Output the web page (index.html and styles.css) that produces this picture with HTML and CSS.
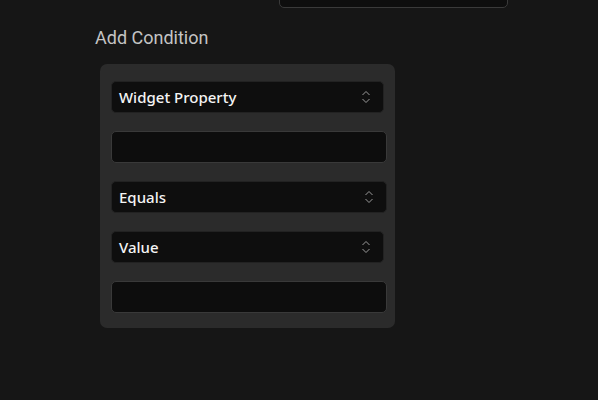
FILE: index.html
```html
<!DOCTYPE html>
<html lang="en">
<head>
<meta charset="utf-8">
<title>Add Condition</title>
<link rel="stylesheet" href="styles.css">
</head>
<body>
<div class="page">
  <div class="top-row">
    <span class="top-label">Widget Type</span>
    <div class="top-input"></div>
  </div>
  <h2 class="heading">Add Condition</h2>
  <div class="card">
    <div class="select narrow">
      <span>Widget Property</span>
      <svg class="chev" width="10" height="16" viewBox="0 0 10 16"><path d="M1.5 6 L5 2.5 L8.5 6 M1.5 10 L5 13.5 L8.5 10" fill="none" stroke="#9a9a9a" stroke-width="1"/></svg>
    </div>
    <div class="input"></div>
    <div class="select">
      <span>Equals</span>
      <svg class="chev" width="10" height="16" viewBox="0 0 10 16"><path d="M1.5 6 L5 2.5 L8.5 6 M1.5 10 L5 13.5 L8.5 10" fill="none" stroke="#9a9a9a" stroke-width="1"/></svg>
    </div>
    <div class="select narrow">
      <span>Value</span>
      <svg class="chev" width="10" height="16" viewBox="0 0 10 16"><path d="M1.5 6 L5 2.5 L8.5 6 M1.5 10 L5 13.5 L8.5 10" fill="none" stroke="#9a9a9a" stroke-width="1"/></svg>
    </div>
    <div class="input"></div>
  </div>
</div>
</body>
</html>
```
FILE: styles.css
```css
html, body {
  margin: 0;
  padding: 0;
  background: #161616;
  height: 100%;
}
.page {
  width: 598px;
  height: 400px;
  overflow: hidden;
  font-family: Roboto, "Liberation Sans", sans-serif;
}
.top-row {
  display: flex;
  align-items: center;
  margin-top: -26px;
  height: 33px;
}
.top-label {
  width: 200px;
  text-align: right;
  color: #bdbdbd;
  font-size: 16px;
  margin-top: -10px;
}
.top-input {
  margin-left: 79px;
  width: 227px;
  height: 32px;
  background: #0e0e0e;
  border: 1px solid #3a3a3a;
  border-radius: 5px;
}
.heading {
  margin: 20px 0 0 95px;
  font-size: 18px;
  font-weight: 400;
  line-height: 22px;
  color: #c4c4c4;
}
.card {
  margin: 15px 0 0 100px;
  width: 295px;
  height: 264px;
  box-sizing: border-box;
  padding: 17px 0 0 11px;
  background: #2b2b2b;
  border-radius: 7px;
  display: flex;
  flex-direction: column;
  gap: 18px;
}
.select {
  width: 276px;
  height: 32px;
  box-sizing: border-box;
  background: #0e0e0e;
  border: 1px solid #222;
  border-radius: 5px;
  display: flex;
  align-items: center;
  justify-content: space-between;
  padding: 0 12px 0 7px;
  color: #f4f4f4;
  font-family: "Noto Sans", Inter, sans-serif;
  font-size: 15px;
  font-weight: 500;
}
.select.narrow {
  width: 273px;
}
.chev {
  display: block;
}
.input {
  width: 276px;
  height: 32px;
  box-sizing: border-box;
  background: #0d0d0d;
  border: 1px solid #393939;
  border-radius: 5px;
}
```
